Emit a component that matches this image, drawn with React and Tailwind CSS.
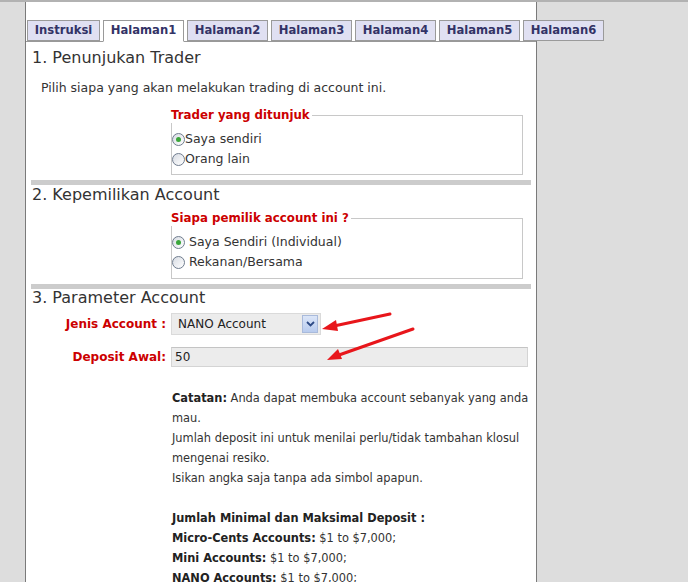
import React from 'react'

const TABS = [
  { label: 'Instruksi', w: 'w-[73px]' },
  { label: 'Halaman1', w: 'w-[81px]', active: true },
  { label: 'Halaman2', w: 'w-[81px]' },
  { label: 'Halaman3', w: 'w-[81px]' },
  { label: 'Halaman4', w: 'w-[81px]' },
  { label: 'Halaman5', w: 'w-[81px]' },
  { label: 'Halaman6', w: 'w-[81px]' },
]

function Radio({ checked }) {
  return (
    <span className="w-[13px] h-[13px] rounded-full border border-[#6f7c8e] bg-gradient-to-br from-[#d8dce3] to-white flex items-center justify-center shrink-0">
      {checked && <span className="w-[5px] h-[5px] rounded-full bg-[#3aa63a]" />}
    </span>
  )
}

function Box({ legend, items, spaced, h }) {
  return (
    <div className={`relative ml-[140px] w-[352px] ${h} border border-[#c8c8c8]`}>
      <span className="absolute left-[-1px] top-[-9px] bg-white pr-[2px] text-[#cc0000] font-bold text-[11.8px] leading-[16px]">
        {legend}
      </span>
      <div className="flex flex-col pt-[13px]">
        {items.map((it, i) => (
          <div key={it.label} className="flex items-center h-[20px] text-[12.5px] text-[#333]">
            <Radio checked={i === 0} />
            <span className={spaced ? 'ml-[4px]' : ''}>{it.label}</span>
          </div>
        ))}
      </div>
    </div>
  )
}

function Bar() {
  return <div className="h-[5px] bg-[#cccccc] w-[500px]" />
}

export default function App() {
  return (
    <div
      className="relative w-[688px] h-[582px] overflow-hidden bg-[#dddddd] border-t-2 border-[#b2b2b2]"
      style={{ fontFamily: '"DejaVu Sans", Verdana, sans-serif' }}
    >
      <div className="ml-[25px] w-[512px] h-full bg-white border-x border-[#7a7a7a]">
        {/* tabs */}
        <div className="pt-[18px] pl-[1px] flex gap-[3px] border-b border-[#999] h-[40px] items-end">
          {TABS.map((t) => (
            <div
              key={t.label}
              className={`${t.w} shrink-0 border border-[#9a9a9a] flex items-center justify-center text-[11.6px] font-bold text-[#333366] ${
                t.active ? 'bg-white border-b-white -mb-px h-[22px]' : 'bg-[#e0e0f2] h-[21px]'
              }`}
            >
              {t.label}
            </div>
          ))}
        </div>

        <div className="pl-[5px] pr-[4px]">
          <h2 className="pl-[1px] mt-[5px] h-[22px] leading-[22px] text-[16px] text-[#333]">1. Penunjukan Trader</h2>
          <p className="pl-[10px] mt-[10px] h-[18px] leading-[18px] text-[12.5px] text-[#333]">
            Pilih siapa yang akan melakukan trading di account ini.
          </p>
          <div className="mt-[18px]">
            <Box h="h-[60px]" legend="Trader yang ditunjuk" items={[{ label: 'Saya sendiri' }, { label: 'Orang lain' }]} />
          </div>
          <div className="mt-[5px]"><Bar /></div>

          <h2 className="pl-[1px] h-[20px] leading-[20px] text-[16px] text-[#333]">2. Kepemilikan Account</h2>
          <div className="mt-[13px]">
            <Box
              h="h-[61px]"
              spaced
              legend="Siapa pemilik account ini ?"
              items={[{ label: 'Saya Sendiri (Individual)' }, { label: 'Rekanan/Bersama' }]}
            />
          </div>
          <div className="mt-[5px]"><Bar /></div>

          <h2 className="pl-[1px] h-[18px] leading-[18px] text-[16px] text-[#333]">3. Parameter Account</h2>

          <div className="flex items-center mt-[6px]">
            <div className="w-[135px] text-right text-[#cc0000] font-bold text-[12px]">Jenis Account :</div>
            <div className="ml-[5px] w-[150px] h-[22px] bg-[#ececec] border border-[#dadada] flex items-center justify-between pl-[6px] pr-[2px]">
              <span className="text-[12px] text-[#222]">NANO Account</span>
              <span className="w-[16px] h-[18px] border border-[#a9badb] bg-gradient-to-b from-[#dce6f8] to-[#b8cbee] flex items-center justify-center">
                <svg width="9" height="6" viewBox="0 0 9 6">
                  <path d="M1 1 L4.5 4.5 L8 1" fill="none" stroke="#2d4a86" strokeWidth="1.8" />
                </svg>
              </span>
            </div>
          </div>

          <div className="flex items-center mt-[12px]">
            <div className="w-[135px] text-right text-[#cc0000] font-bold text-[12px]">Deposit Awal:</div>
            <div className="ml-[5px] w-[357px] h-[20px] bg-[#ececec] border border-[#d4d4d4] border-t-[#c4c4c4] flex items-center pl-[3px] text-[12px] text-[#222]">
              50
            </div>
          </div>

          <div className="ml-[141px] mt-[21px] text-[11.4px] leading-[20px] text-[#333] whitespace-nowrap">
            <div><b className="text-[#222]">Catatan:</b> Anda dapat membuka account sebanyak yang anda</div>
            <div>mau.</div>
            <div>Jumlah deposit ini untuk menilai perlu/tidak tambahan klosul</div>
            <div>mengenai resiko.</div>
            <div>Isikan angka saja tanpa ada simbol apapun.</div>
            <div className="h-[20px]" />
            <div className="font-bold text-[#222]">Jumlah Minimal dan Maksimal Deposit :</div>
            <div><b className="text-[#222]">Micro-Cents Accounts:</b> $1 to $7,000;</div>
            <div><b className="text-[#222]">Mini Accounts:</b> $1 to $7,000;</div>
            <div><b className="text-[#222]">NANO Accounts:</b> $1 to $7,000;</div>
          </div>
        </div>
      </div>

      {/* annotation arrows */}
      <svg className="absolute left-0 top-0 pointer-events-none" width="688" height="582">
        <line x1="390" y1="312" x2="334" y2="324" stroke="#e8161b" strokeWidth="3" strokeLinecap="round" />
        <polygon points="322,327 336,318 338,329" fill="#e8161b" />
        <line x1="413" y1="327" x2="339" y2="353" stroke="#e8161b" strokeWidth="3" strokeLinecap="round" />
        <polygon points="327,358 338,347 342,357" fill="#e8161b" />
      </svg>
    </div>
  )
}
